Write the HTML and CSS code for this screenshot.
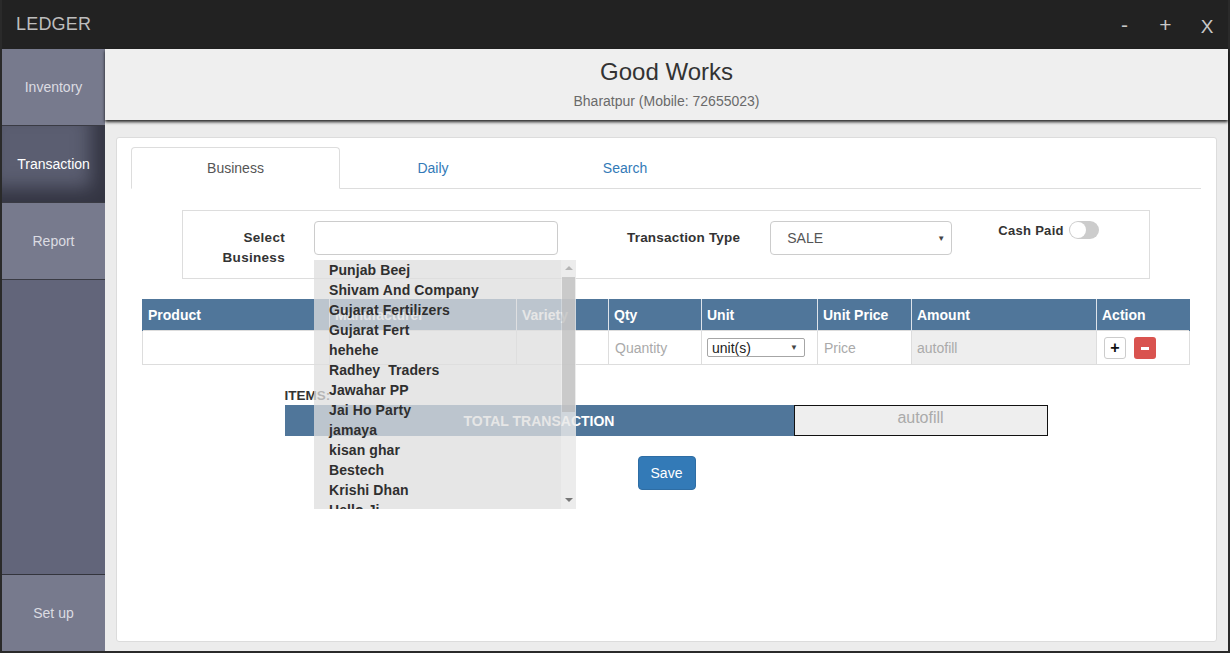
FILE: index.html
```html
<!DOCTYPE html>
<html>
<head>
<meta charset="utf-8">
<link rel="stylesheet" href="styles.css">
</head>
<body>
<div class="window">
  <div class="titlebar">
    <div class="brand">LEDGER</div>
    <div class="controls"><span>-</span><span>+</span><span class="x">X</span></div>
  </div>
  <div class="body">
    <nav class="sidebar">
      <div class="nav-item">Inventory</div>
      <div class="nav-item active">Transaction</div>
      <div class="nav-item">Report</div>
      <div class="nav-spacer"></div>
      <div class="nav-item last">Set up</div>
    </nav>
    <main class="content">
      <header class="shop">
        <div class="shop-name">Good Works</div>
        <div class="shop-addr">Bharatpur (Mobile: 72655023)</div>
      </header>
      <section class="panel">
        <div class="tabs">
          <div class="tab active">Business</div>
          <div class="tab daily">Daily</div>
          <div class="tab search">Search</div>
          <div class="tab-rest"></div>
        </div>
        <div class="form-box">
          <div class="lbl-business">Select<br>Business</div>
          <div class="input-wrap">
            <div class="text-input"></div>
            <div class="dropdown">
              <ul class="dd-list">
                <li>Punjab Beej</li>
                <li>Shivam And Company</li>
                <li>Gujarat Fertilizers</li>
                <li>Gujarat Fert</li>
                <li>hehehe</li>
                <li>Radhey&nbsp; Traders</li>
                <li>Jawahar PP</li>
                <li>Jai Ho Party</li>
                <li>jamaya</li>
                <li>kisan ghar</li>
                <li>Bestech</li>
                <li>Krishi Dhan</li>
                <li>Hello Ji</li>
              </ul>
              <div class="dd-scroll">
                <div class="arrow up"></div>
                <div class="thumb"></div>
                <div class="arrow down"></div>
              </div>
            </div>
          </div>
          <div class="lbl-type">Transaction Type</div>
          <div class="select-box"><span>SALE</span><span class="caret">▼</span></div>
          <div class="cash"><span>Cash Paid</span><span class="toggle"><span class="knob"></span></span></div>
        </div>
        <table class="items">
          <colgroup>
            <col style="width:187px"><col style="width:187px"><col style="width:92px"><col style="width:93px">
            <col style="width:116px"><col style="width:94px"><col style="width:185px"><col style="width:93px">
          </colgroup>
          <thead>
            <tr><th>Product</th><th>Manufacturer</th><th>Variety</th><th>Qty</th><th>Unit</th><th>Unit Price</th><th>Amount</th><th>Action</th></tr>
          </thead>
          <tbody>
            <tr>
              <td></td><td></td><td></td>
              <td class="ph">Quantity</td>
              <td><div class="unit-sel"><span>unit(s)</span><span class="caret">▼</span></div></td>
              <td class="ph">Price</td>
              <td class="ph fill">autofill</td>
              <td><div class="actions"><span class="btn-add">+</span><span class="btn-del"></span></div></td>
            </tr>
          </tbody>
        </table>
        <div class="totals">
          <div class="items-lbl">ITEMS:</div>
          <div class="total-row">
            <div class="total-lbl">TOTAL TRANSACTION</div>
            <div class="total-val">autofill</div>
          </div>
        </div>
        <div class="save-row"><button class="save">Save</button></div>
      </section>
    </main>
  </div>
</div>
</body>
</html>
```
FILE: styles.css
```css
* { box-sizing: border-box; }
html, body { margin: 0; padding: 0; }
body {
  font-family: "Liberation Sans", Arial, sans-serif;
  background: #222;
  width: 1230px;
  height: 653px;
  overflow: hidden;
}
.window {
  width: 1230px;
  height: 653px;
  display: flex;
  flex-direction: column;
  background: #222;
  border-left: 2px solid #2a2a2a;
  border-right: 2px solid #2a2a2a;
  border-bottom: 2px solid #2a2a2a;
}
.titlebar {
  height: 49px;
  flex: none;
  display: flex;
  align-items: center;
  justify-content: space-between;
  background: #222;
  color: #bdbdbd;
}
.brand {
  font-size: 18px;
  padding-left: 14px;
  margin-top: -1px;
  letter-spacing: 0.2px;
}
.controls {
  display: flex;
  font-size: 21px;
  padding-right: 0;
  color: #c8c8c8;
  margin-top: 2px;
}
.controls span { width: 41px; text-align: center; }
.controls .x { font-size: 19px; margin-top: 3px; width: 42px; }
.body {
  flex: 1;
  display: flex;
  min-height: 0;
}
.sidebar {
  width: 103px;
  flex: none;
  display: flex;
  flex-direction: column;
  background: #62657a;
}
.nav-item {
  height: 77px;
  flex: none;
  display: flex;
  align-items: center;
  justify-content: center;
  background: #777a8d;
  color: #dcdce2;
  font-size: 14px;
  border-bottom: 1px solid #3a3b44;
}
.nav-item.active {
  background: #5b5e71;
  color: #fff;
  box-shadow: inset -14px -14px 18px rgba(20, 20, 30, 0.55);
}
.nav-spacer { flex: 1; background: #62657a; border-bottom: 1px solid #33343c; }
.nav-item.last { border-bottom: none; height: 76px; }
.content {
  flex: 1;
  background: #ececec;
  display: flex;
  flex-direction: column;
  min-width: 0;
}
.shop {
  height: 71px;
  flex: none;
  background: #efefef;
  text-align: center;
  box-shadow: 0 2px 3px rgba(0, 0, 0, 0.85);
  position: relative;
  z-index: 1;
  padding-top: 9px;
}
.shop-name { font-size: 24px; color: #333; line-height: 28px; }
.shop-addr { font-size: 14px; color: #6a6a6a; margin-top: 7px; line-height: 16px; }
.panel {
  flex: 1;
  margin: 17px 11px 9px 11px;
  background: #fff;
  border: 1px solid #dcdcdc;
  border-radius: 3px;
  padding: 9px 15px 0 14px;
}
.tabs {
  display: flex;
  height: 42px;
}
.tab {
  height: 42px;
  display: flex;
  align-items: center;
  justify-content: center;
  font-size: 14px;
  color: #337ab7;
  border-bottom: 1px solid #ddd;
  padding-top: 0;
}
.tab.active {
  width: 209px;
  color: #555;
  border: 1px solid #ddd;
  border-bottom-color: transparent;
  border-radius: 4px 4px 0 0;
}
.tab.daily { width: 186px; }
.tab.search { width: 198px; }
.tab-rest { flex: 1; border-bottom: 1px solid #ddd; }
.form-box {
  margin: 21px 51px 0 51px;
  height: 69px;
  border: 1px solid #ddd;
  display: flex;
  align-items: flex-start;
  padding-top: 10px;
}
.lbl-business {
  width: 102px;
  text-align: right;
  font-weight: bold;
  font-size: 13.5px;
  color: #333;
  line-height: 20px;
  margin-top: 7px;
  letter-spacing: 0.3px;
}
.input-wrap {
  position: relative;
  margin-left: 29px;
  width: 244px;
}
.text-input {
  height: 34px;
  border: 1px solid #ccc;
  border-radius: 4px;
  background: #fff;
}
.dropdown {
  position: absolute;
  left: 0;
  top: 39px;
  width: 262px;
  height: 249px;
  background: rgba(222, 222, 222, 0.76);
  display: flex;
  z-index: 5;
}
.dd-list {
  list-style: none;
  margin: 0;
  padding: 0 0 0 15px;
  flex: 1;
  overflow: hidden;
}
.dd-list li {
  height: 20px;
  line-height: 20px;
  font-size: 14px;
  font-weight: bold;
  color: #2f2f2f;
  white-space: nowrap;
  letter-spacing: 0.1px;
}
.dd-scroll {
  width: 15px;
  flex: none;
  background: rgba(245, 245, 245, 0.35);
  position: relative;
}
.dd-scroll .thumb {
  position: absolute;
  left: 1px;
  top: 17px;
  width: 13px;
  height: 135px;
  background: rgba(175, 175, 175, 0.55);
}
.arrow {
  position: absolute;
  left: 4px;
  width: 0;
  height: 0;
  border-left: 4px solid transparent;
  border-right: 4px solid transparent;
}
.arrow.up { top: 6px; border-bottom: 4px solid #b5b5b5; }
.arrow.down { bottom: 7px; border-top: 4px solid #777; }
.lbl-type {
  margin-left: 69px;
  font-weight: bold;
  font-size: 13.5px;
  color: #333;
  line-height: 34px;
  letter-spacing: 0.2px;
}
.select-box {
  margin-left: 30px;
  width: 182px;
  height: 34px;
  border: 1px solid #ccc;
  border-radius: 4px;
  display: flex;
  align-items: center;
  justify-content: space-between;
  padding: 0 6px 0 16px;
  font-size: 14px;
  color: #555;
}
.caret { font-size: 8px; color: #444; }
.cash {
  margin-left: 46px;
  display: flex;
  align-items: center;
  font-weight: bold;
  font-size: 13px;
  color: #333;
  margin-top: 0;
  letter-spacing: 0.3px;
}
.toggle {
  width: 30px;
  height: 18px;
  border-radius: 9px;
  background: #ccc;
  margin-left: 5px;
  position: relative;
  display: inline-block;
}
.knob {
  position: absolute;
  left: 1px;
  top: 1px;
  width: 16px;
  height: 16px;
  border-radius: 50%;
  background: #fff;
}
.items {
  margin: 20px 0 0 11px;
  width: 1047px;
  border-collapse: collapse;
  table-layout: fixed;
}
.items th {
  background: #50769a;
  color: #fff;
  font-size: 14px;
  font-weight: bold;
  text-align: left;
  height: 31px;
  padding: 0 5px;
  border-left: 1px solid #dde3ea;
  border-right: 1px solid #dde3ea;
  border-top: 1px solid #50769a;
  white-space: nowrap;
  overflow: visible;
}
.items th:first-child { border-left-color: #50769a; }
.items th:last-child { border-right-color: #50769a; }
.items td {
  height: 34px;
  border: 1px solid #ddd;
  padding: 0 6px;
  font-size: 14px;
}
.items td.ph { color: #aaa; }
.items td.fill { background: #eee; padding-left: 5px; }
.unit-sel {
  width: 98px;
  height: 19px;
  border: 1px solid #a6a6a6;
  border-radius: 2px;
  display: flex;
  align-items: center;
  justify-content: space-between;
  padding: 0 6px 0 4px;
  color: #222;
  font-size: 14px;
  margin-left: -1px;
}
.actions { display: flex; align-items: center; padding-left: 1px; }
.btn-add {
  width: 22px;
  height: 22px;
  border: 1px solid #ccc;
  border-radius: 3px;
  display: flex;
  align-items: center;
  justify-content: center;
  font-weight: bold;
  font-size: 16px;
  color: #111;
}
.btn-del {
  width: 22px;
  height: 22px;
  border-radius: 3px;
  background: #d9534f;
  margin-left: 8px;
  position: relative;
}
.btn-del::after {
  content: "";
  position: absolute;
  left: 7px;
  top: 10px;
  width: 8px;
  height: 3px;
  background: #fff;
}
.totals {
  width: 763px;
  margin: 23px auto 0 auto;
  position: relative;
  left: 0;
}
.items-lbl {
  font-weight: bold;
  font-size: 13.5px;
  color: #333;
  line-height: 15px;
  height: 17px;
}
.total-row { display: flex; height: 31px; }
.total-lbl {
  width: 509px;
  background: #50769a;
  color: #fff;
  font-weight: bold;
  font-size: 14px;
  display: flex;
  align-items: center;
  justify-content: center;
}
.total-val {
  flex: 1;
  background: #eee;
  border: 1px solid #111;
  color: #aaa;
  font-size: 16px;
  text-align: center;
  line-height: 24px;
}
.save-row { display: flex; justify-content: center; margin-top: 20px; padding-left: 1px; }
.save {
  width: 58px;
  height: 34px;
  background: #337ab7;
  border: 1px solid #2e6da4;
  border-radius: 4px;
  color: #fff;
  font-family: "Liberation Sans", Arial, sans-serif;
  font-size: 14px;
}
```
